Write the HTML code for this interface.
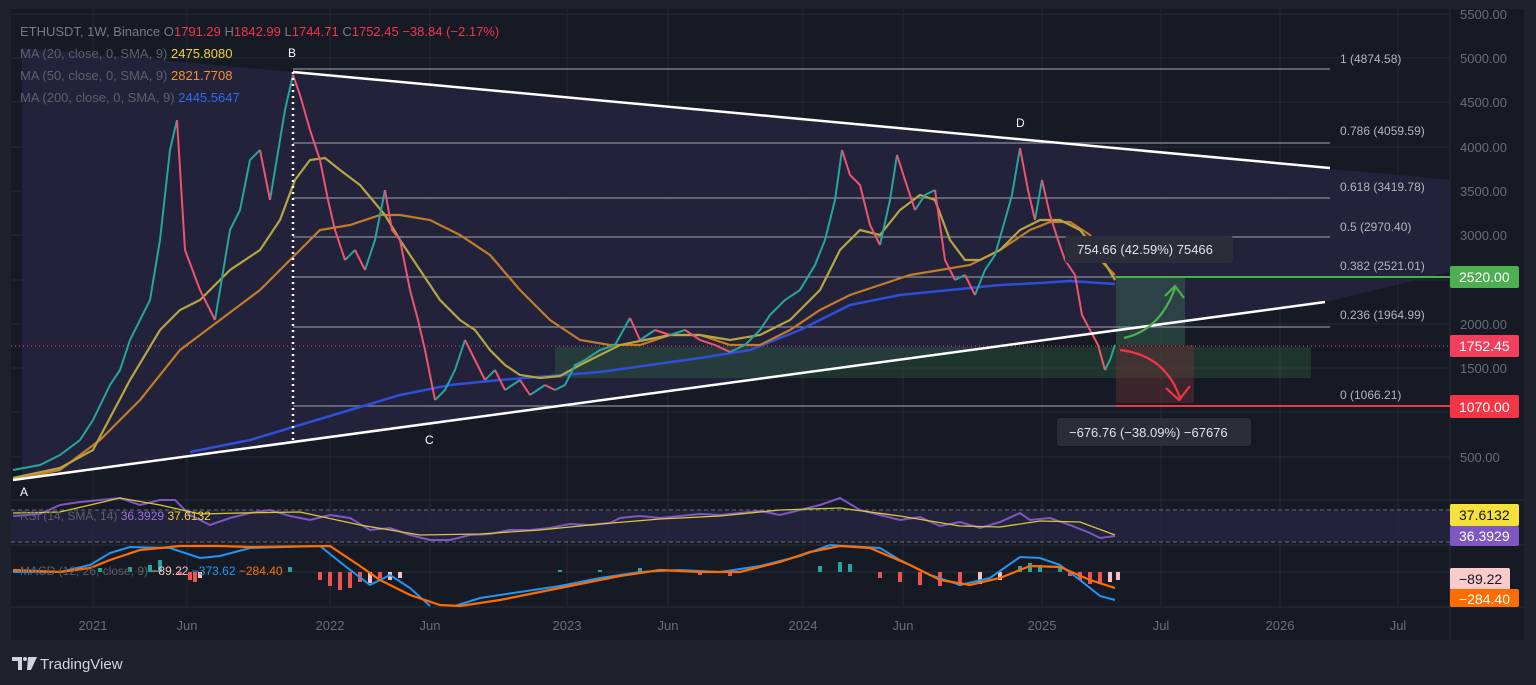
<!DOCTYPE html>
<html><head><meta charset="utf-8"><style>
html,body{margin:0;padding:0;background:#1e222d;width:1536px;height:685px;overflow:hidden;font-family:"Liberation Sans",sans-serif}
svg{position:absolute;left:0;top:0}
</style></head><body>
<svg width="1536" height="685" viewBox="0 0 1536 685" font-family="Liberation Sans, sans-serif">
<rect x="0" y="0" width="1536" height="685" fill="#1e222d"/>
<rect x="11" y="9" width="1513" height="631" fill="#161a25"/>
<g stroke="#262a36" stroke-width="1">
<line x1="93" y1="9" x2="93" y2="607"/><line x1="187" y1="9" x2="187" y2="607"/><line x1="330" y1="9" x2="330" y2="607"/><line x1="430" y1="9" x2="430" y2="607"/><line x1="567" y1="9" x2="567" y2="607"/><line x1="668" y1="9" x2="668" y2="607"/><line x1="803" y1="9" x2="803" y2="607"/><line x1="903" y1="9" x2="903" y2="607"/><line x1="1042" y1="9" x2="1042" y2="607"/><line x1="1161" y1="9" x2="1161" y2="607"/><line x1="1280" y1="9" x2="1280" y2="607"/><line x1="1398" y1="9" x2="1398" y2="607"/>
<line x1="11" y1="14" x2="1450" y2="14"/><line x1="11" y1="58" x2="1450" y2="58"/><line x1="11" y1="102" x2="1450" y2="102"/><line x1="11" y1="147" x2="1450" y2="147"/><line x1="11" y1="191" x2="1450" y2="191"/><line x1="11" y1="235" x2="1450" y2="235"/><line x1="11" y1="280" x2="1450" y2="280"/><line x1="11" y1="324" x2="1450" y2="324"/><line x1="11" y1="368" x2="1450" y2="368"/><line x1="11" y1="412" x2="1450" y2="412"/><line x1="11" y1="457" x2="1450" y2="457"/>
</g>
<line x1="1450" y1="9" x2="1450" y2="640" stroke="#2a2e39"/>
<line x1="11" y1="500" x2="1524" y2="500" stroke="#2a2e39"/>
<line x1="11" y1="545" x2="1524" y2="545" stroke="#2a2e39"/>
<line x1="11" y1="607" x2="1524" y2="607" stroke="#2a2e39"/>
<polygon points="22,48 293,72 1450,180 1450,272 1325,302 22,480" fill="#242440" opacity="0.85"/>
<rect x="555" y="347" width="756" height="31" fill="#2f6a3c" opacity="0.35"/>
<rect x="1116" y="278" width="69" height="67" fill="#3a6a55" opacity="0.45"/>
<rect x="1116" y="345" width="78" height="58" fill="#6a3038" opacity="0.45"/>
<g stroke="#8a8d96" stroke-width="1.2">
<line x1="293" y1="69" x2="1330" y2="69"/><line x1="293" y1="143" x2="1330" y2="143"/><line x1="293" y1="198" x2="1330" y2="198"/><line x1="293" y1="237" x2="1330" y2="237"/><line x1="293" y1="327" x2="1330" y2="327"/><line x1="293" y1="406" x2="1116" y2="406"/><line x1="293" y1="277" x2="1116" y2="277"/>
</g>
<line x1="11" y1="346" x2="1450" y2="346" stroke="#f0506e" stroke-width="1" stroke-dasharray="1,3"/>
<polyline fill="none" stroke="#2e4fd8" stroke-width="2.5" points="190,452 250,440 300,425 350,410 400,395 450,385 500,380 550,376 600,372 650,365 700,358 750,350 800,330 850,305 900,295 950,290 1000,285 1040,283 1070,281 1115,284"/>
<polyline fill="none" stroke="#c17c2a" stroke-width="2.2" points="13,480 60,470 100,440 140,400 180,350 220,320 260,290 290,260 320,230 350,225 380,215 400,215 430,220 460,235 490,255 520,290 550,320 580,340 610,345 640,345 670,335 700,335 730,345 760,345 790,330 820,310 850,295 880,285 910,275 940,270 970,265 1000,250 1030,230 1050,222 1070,222 1090,235 1100,260 1115,275"/>
<polyline fill="none" stroke="#b5a642" stroke-width="2.2" points="13,478 60,468 93,450 130,380 160,330 180,310 200,300 230,270 260,250 280,220 295,180 310,160 325,158 340,170 360,185 385,215 400,240 420,270 440,300 460,320 475,330 490,350 505,365 520,375 540,378 560,376 580,365 600,355 620,345 645,340 670,335 700,335 730,340 760,335 790,320 820,290 840,250 860,230 880,235 900,210 920,195 935,200 950,240 965,260 980,260 1000,250 1020,230 1040,220 1060,220 1080,230 1100,255 1115,280"/>
<path fill="none" stroke="#26a69a" stroke-width="2" d="M13,470 L40,465 60,455 80,440 93,420 110,385 120,370 130,340 140,320 150,300 160,240 170,150 177,120 M215,320 L230,230 240,210 250,160 260,150 M270,200 L280,140 285,110 293,75 M345,260 L355,250 M365,270 L375,240 385,190 M435,400 L445,390 455,370 465,340 M485,380 L495,370 M505,390 L520,380 M530,395 L545,385 M555,390 L565,385 575,365 585,360 600,350 615,345 630,318 M640,340 L655,330 M670,335 L685,330 M730,352 L745,345 760,330 770,315 785,300 800,290 815,265 825,240 835,200 842,150 M880,245 L890,200 897,155 M915,210 L925,195 935,190 M955,280 L965,275 M975,295 L985,270 995,255 1005,220 1012,195 1020,148 M1035,220 L1042,180 M1105,370 L1110,360 1115,345"/>
<path fill="none" stroke="#ef5370" stroke-width="2" d="M177,120 L185,250 200,290 215,320 M260,150 L270,200 M293,75 L300,95 310,130 320,160 328,200 335,230 345,260 M355,250 L365,270 M385,190 L392,230 400,240 410,290 418,320 425,350 435,400 M465,340 L475,360 485,380 M495,370 L505,390 M520,380 L530,395 M545,385 L555,390 M630,318 L640,340 M655,330 L670,335 M685,330 L700,340 715,345 730,352 M842,150 L850,175 860,185 870,225 880,245 M897,155 L905,180 915,210 M935,190 L945,260 955,280 M965,275 L975,295 M1020,148 L1028,190 1035,220 M1042,180 L1050,215 1058,240 1065,260 1075,275 1082,315 1090,330 1098,345 1105,370"/>
<line x1="293" y1="72" x2="1330" y2="168" stroke="#fff" stroke-width="2.5"/>
<line x1="13" y1="480" x2="1325" y2="302" stroke="#fff" stroke-width="2.5"/>
<line x1="293" y1="72" x2="293" y2="440" stroke="#fff" stroke-width="2.5" stroke-dasharray="2,4"/>
<line x1="1116" y1="277" x2="1450" y2="277" stroke="#4caf50" stroke-width="2"/>
<line x1="1116" y1="406" x2="1450" y2="406" stroke="#f23645" stroke-width="2"/>
<path d="M1124,338 Q1160,330 1175,288 M1165,296 L1175,286 L1184,298" fill="none" stroke="#4caf50" stroke-width="2.2"/>
<path d="M1120,350 Q1165,355 1180,398 M1166,388 L1179,400 L1190,386" fill="none" stroke="#f23645" stroke-width="2.2"/>
<g fill="#fff" font-size="12"><text x="288" y="57">B</text><text x="1016" y="127">D</text><text x="425" y="444">C</text><text x="20" y="496">A</text></g>
<g fill="#b2b5be" font-size="12">
<text x="1340" y="63">1 (4874.58)</text><text x="1340" y="135">0.786 (4059.59)</text><text x="1340" y="191">0.618 (3419.78)</text><text x="1340" y="231">0.5 (2970.40)</text><text x="1340" y="270">0.382 (2521.01)</text><text x="1340" y="319">0.236 (1964.99)</text><text x="1340" y="399">0 (1066.21)</text>
</g>
<rect x="1065" y="236" width="168" height="27" rx="3" fill="#2a2e39"/>
<text x="1077" y="254" fill="#e0e3eb" font-size="13">754.66 (42.59%) 75466</text>
<rect x="1057" y="418" width="194" height="28" rx="3" fill="#2a2e39"/>
<text x="1069" y="437" fill="#e0e3eb" font-size="13">−676.76 (−38.09%) −67676</text>
<text x="20" y="36" font-size="13" fill="#787b86">ETHUSDT, 1W, Binance  O<tspan fill="#f23645">1791.29</tspan>  H<tspan fill="#f23645">1842.99</tspan>  L<tspan fill="#f23645">1744.71</tspan>  C<tspan fill="#f23645">1752.45  −38.84 (−2.17%)</tspan></text>
<text x="20" y="58" font-size="13" fill="#5d606b">MA (20, close, 0, SMA, 9)  <tspan fill="#f0d33a">2475.8080</tspan></text>
<text x="20" y="80" font-size="13" fill="#5d606b">MA (50, close, 0, SMA, 9)  <tspan fill="#f5922c">2821.7708</tspan></text>
<text x="20" y="102" font-size="13" fill="#5d606b">MA (200, close, 0, SMA, 9)  <tspan fill="#2e6bf0">2445.5647</tspan></text>
<rect x="11" y="510" width="1439" height="32" fill="#252440" opacity="0.8"/>
<line x1="11" y1="510" x2="1450" y2="510" stroke="#6a6d78" stroke-dasharray="4,3"/>
<line x1="11" y1="542" x2="1450" y2="542" stroke="#6a6d78" stroke-dasharray="4,3"/>
<polyline fill="none" stroke="#7e57c2" stroke-width="2" points="13,516 40,514 60,505 80,502 100,500 120,498 140,505 160,500 175,500 190,515 210,525 230,518 250,513 270,510 290,516 310,520 330,515 350,518 370,530 390,528 410,535 430,540 450,540 470,535 490,534 510,530 530,530 550,528 570,524 590,525 610,523 620,518 640,516 660,518 680,516 700,514 720,515 740,513 760,511 780,515 800,510 820,505 840,498 860,510 880,515 900,520 920,517 940,526 960,522 980,528 1000,522 1020,513 1030,520 1050,518 1070,525 1090,533 1100,538 1115,536"/>
<polyline fill="none" stroke="#d8c83a" stroke-width="1.3" points="13,513 60,512 120,498 160,505 200,514 240,513 300,512 360,525 420,535 480,534 540,530 600,524 660,519 720,516 780,510 840,508 900,516 960,526 1000,527 1040,521 1080,522 1115,535"/>
<text x="20" y="520" font-size="12" fill="#5d606b">RSI (14, SMA, 14) <tspan fill="#9a72d8">36.3929</tspan> <tspan fill="#f0d33a">37.6132</tspan></text>
<line x1="11" y1="572" x2="1450" y2="572" stroke="#2a2e39"/>
<path stroke="#26a69a" stroke-width="4" d="M100,572 V568 M130,572 V567 M150,572 V565 M160,572 V560 M290,572 V567 M560,572 V570 M600,572 V570 M640,572 V568 M820,572 V566 M840,572 V562 M850,572 V564 M1020,572 V566 M1030,572 V563 M1040,572 V565 M1060,572 V568"/>
<path stroke="#ef5350" stroke-width="4" d="M180,572 V575 M190,572 V580 M195,572 V582 M320,572 V580 M330,572 V586 M340,572 V590 M350,572 V588 M360,572 V582 M380,572 V578 M700,572 V575 M730,572 V576 M880,572 V578 M900,572 V582 M920,572 V585 M940,572 V586 M960,572 V586 M1070,572 V576 M1080,572 V580 M1090,572 V584 M1100,572 V584"/>
<path stroke="#f8c0c0" stroke-width="4" d="M200,572 V578 M370,572 V583 M390,572 V580 M400,572 V578 M980,572 V584 M1000,572 V580 M1110,572 V582 M1118,572 V580"/>
<polyline fill="none" stroke="#2196f3" stroke-width="2" points="13,572 60,572 90,565 110,553 130,547 170,548 200,558 220,556 250,548 320,546 345,566 370,585 390,575 410,588 430,606"/>
<polyline fill="none" stroke="#2196f3" stroke-width="2" points="455,606 480,598 520,592 560,586 600,578 640,572 680,570 720,572 760,566 800,556 830,545 880,548 900,560 930,575 960,585 990,578 1020,557 1040,558 1060,565 1080,580 1100,596 1115,600"/>
<polyline fill="none" stroke="#ff6d00" stroke-width="2.2" points="13,570 60,572 90,568 110,560 140,550 180,546 220,546 250,547 330,546 360,566 380,580 410,595 440,605 460,606 500,600 540,592 580,584 620,576 660,570 700,572 740,572 780,562 810,552 840,546 870,548 910,565 940,580 970,585 1000,578 1030,566 1060,567 1090,580 1115,588"/>
<text x="20" y="575" font-size="12" fill="#5d606b">MACD (12, 26, close, 9) <tspan fill="#f8c0c0">−89.22</tspan>  <tspan fill="#2196f3">−373.62</tspan>  <tspan fill="#ff6d00">−284.40</tspan></text>
<g font-size="13" fill="#6a6d78">
<text x="1460" y="19">5500.00</text><text x="1460" y="63">5000.00</text><text x="1460" y="107">4500.00</text><text x="1460" y="152">4000.00</text><text x="1460" y="196">3500.00</text><text x="1460" y="240">3000.00</text><text x="1460" y="329">2000.00</text><text x="1460" y="373">1500.00</text><text x="1460" y="462">500.00</text>
</g>
<rect x="1450" y="266" width="69" height="22" rx="2" fill="#4caf50"/><text x="1459" y="282" font-size="14" fill="#fff">2520.00</text>
<rect x="1450" y="335" width="69" height="22" rx="2" fill="#f23f5c"/><text x="1459" y="351" font-size="14" fill="#fff">1752.45</text>
<rect x="1450" y="395" width="69" height="23" rx="2" fill="#f23645"/><text x="1459" y="412" font-size="14" fill="#fff">1070.00</text>
<rect x="1450" y="504" width="69" height="22" rx="2" fill="#f5e13a"/><text x="1459" y="520" font-size="14" fill="#131722">37.6132</text>
<rect x="1450" y="526" width="69" height="20" rx="2" fill="#7e57c2"/><text x="1459" y="541" font-size="14" fill="#fff">36.3929</text>
<rect x="1450" y="568" width="60" height="22" rx="2" fill="#fbcaca"/><text x="1459" y="584" font-size="14" fill="#131722">−89.22</text>
<rect x="1450" y="589" width="69" height="18" rx="2" fill="#ff6d00"/><text x="1459" y="604" font-size="14" fill="#fff">−284.40</text>
<g font-size="13" fill="#6a6d78" text-anchor="middle">
<text x="93" y="630">2021</text><text x="187" y="630">Jun</text><text x="330" y="630">2022</text><text x="430" y="630">Jun</text><text x="567" y="630">2023</text><text x="668" y="630">Jun</text><text x="803" y="630">2024</text><text x="903" y="630">Jun</text><text x="1042" y="630">2025</text><text x="1161" y="630">Jul</text><text x="1280" y="630">2026</text><text x="1398" y="630">Jul</text>
</g>
<g fill="#d1d4dc">
<path d="M12,657 h10 v13 h-4 v-9 h-6z"/><circle cx="25" cy="659" r="2"/><path d="M28,657 h9 l-6,13 h-4 z"/>
</g>
<text x="40" y="669" font-size="15" fill="#d1d4dc">TradingView</text>
</svg>
</body></html>
